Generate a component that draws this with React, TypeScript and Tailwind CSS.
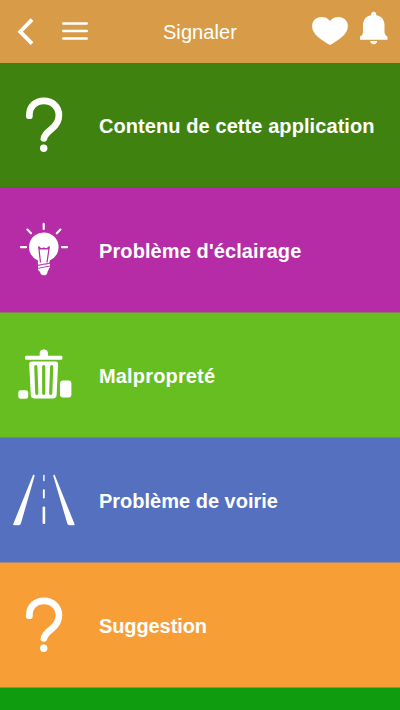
import React from "react";

type Category = {
  label: string;
  color: string;
  tracking: string;
  icon: React.ReactNode;
};

function QuestionIcon() {
  return (
    <svg className="mt-px h-[91px] w-[88px]" viewBox="0 0 88 91" fill="none">
      <path
        d="M29.3 35.4C29.3 26.3 35.5 20.9 43.8 20.9C52.5 20.9 58.9 27 58.9 35.3C58.9 42.3 55.8 45.7 51.4 49.2C46.3 53.3 43.8 55.8 43.8 59.6"
        stroke="white"
        strokeWidth="6.7"
      />
      <path d="M25.95 35V36.2Q26 38.9 28.4 38.9H30.4Q32.7 38.9 32.65 36.2V35Z" fill="white" />
      <path d="M40.5 59H47.1Q46.8 61.8 43.8 61.8Q40.8 61.8 40.5 59Z" fill="white" />
      <circle cx="43.7" cy="68.3" r="3.7" fill="white" />
    </svg>
  );
}

function BulbIcon() {
  return (
    <svg className="mt-px h-[91px] w-[88px]" viewBox="0 0 88 91" fill="none">
      <path
        d="M43.7 18.9V24M27.4 24.6L31 28.3M60.4 24.6L56.8 28.3M21 42.2H26M62 42.2H67"
        stroke="white"
        strokeWidth="2.2"
        strokeLinecap="round"
      />
      <path
        d="M44 27.4A14.7 14.7 0 0 1 49.7 55.6L49.3 58.8L37.9 60.4V55.6A14.7 14.7 0 0 1 44 27.4Z"
        fill="white"
      />
      <path
        d="M40.5 57.5L38.7 41.8L41.1 43.9L43.8 43.2L46.5 43.9L49.3 41.8L47 57.5M39 43.9H49"
        stroke="#b52ca6"
        strokeWidth="1.2"
        strokeLinejoin="round"
      />
      <path d="M38 60.7L50 58.8V62L47.6 66.4Q47.2 70.3 43.8 70.3Q40.6 70.3 40.1 67L38 65Z" fill="white" />
      <path d="M36.7 60.4L50.6 58M37.5 63.4L50.6 60.9" stroke="#b52ca6" strokeWidth="0.9" />
    </svg>
  );
}

function TrashIcon() {
  return (
    <svg className="mt-px h-[91px] w-[88px]" viewBox="0 0 88 91" fill="none">
      <path d="M39.7 26.2V23.5A4.1 4.1 0 0 1 47.9 23.5V26.2Z" fill="white" />
      <rect x="25" y="25.8" width="37.4" height="4" rx="1.4" fill="white" />
      <path
        d="M32.1 31.4H55.2Q58.4 31.4 58.1 34.5L56.6 65.1Q56.4 68.4 53.3 68.4H34Q31 68.4 30.8 65.1L29.2 34.5Q29 31.4 32.1 31.4Z"
        fill="white"
      />
      <path
        d="M35.8 36.5L36.8 63.3M43.7 36.5V63.3M51.7 36.5L50.7 63.3"
        stroke="#66be20"
        strokeWidth="3.2"
        strokeLinecap="round"
      />
      <rect x="18.3" y="60.3" width="9.9" height="8.5" rx="2.4" fill="white" />
      <rect x="60" y="50.5" width="11.4" height="17" rx="3" fill="white" />
    </svg>
  );
}

function RoadIcon() {
  return (
    <svg className="mt-px h-[91px] w-[88px]" viewBox="0 0 88 91" fill="white">
      <path d="M33.1 19.7Q34.9 19.4 34.5 21.2L20.9 68.5Q20.3 70.2 18.9 70.2H14Q12.8 70.2 13.4 68.7Z" />
      <path d="M54.6 19.7Q52.9 19.4 53.4 21.2L67.3 68.5Q67.8 70.2 69.2 70.2H73.8Q75.1 70.2 74.4 68.7Z" />
      <rect x="43.2" y="19.8" width="1.4" height="6.4" rx="0.6" />
      <rect x="42.9" y="34.3" width="1.9" height="9.3" rx="0.8" />
      <rect x="42.6" y="51.4" width="2.6" height="17.7" rx="1.1" />
    </svg>
  );
}

const categories: Category[] = [
  {
    label: "Contenu de cette application",
    color: "border-[#903f7c] bg-[#3f820f]",
    tracking: "tracking-[0.08px]",
    icon: <QuestionIcon />,
  },
  {
    label: "Problème d'éclairage",
    color: "border-[#8c7a60] bg-[#b52ca6]",
    tracking: "tracking-[0.1px]",
    icon: <BulbIcon />,
  },
  {
    label: "Malpropreté",
    color: "border-[#5b9279] bg-[#66be20]",
    tracking: "tracking-[0.16px]",
    icon: <TrashIcon />,
  },
  {
    label: "Problème de voirie",
    color: "border-[#a28a7e] bg-[#5470bf]",
    tracking: "tracking-normal",
    icon: <RoadIcon />,
  },
  {
    label: "Suggestion",
    color: "border-[#849e20] bg-[#f89e37]",
    tracking: "tracking-[-0.1px]",
    icon: <QuestionIcon />,
  },
];

function Header() {
  return (
    <header className="flex h-[63px] shrink-0 items-center bg-[#d89c49] text-white">
      <div className="flex w-[120px] items-center">
        <button aria-label="Retour" className="h-[63px] w-[52px]">
          <svg className="h-[63px] w-[52px]" viewBox="0 0 52 63" fill="none">
            <path d="M32 19.7L20.2 31.7L32 43.7" stroke="white" strokeWidth="3.8" />
          </svg>
        </button>
        <button aria-label="Menu" className="h-[63px] w-[46px]">
          <svg className="h-[63px] w-[46px]" viewBox="0 0 46 63" fill="none">
            <path d="M11.3 23.5H34.7M11.3 31H34.7M11.3 38.5H34.7" stroke="white" strokeWidth="2.6" strokeLinecap="round" />
          </svg>
        </button>
      </div>
      <h1 className="w-[160px] pt-px text-center text-[20px] leading-6 tracking-[0.1px]">Signaler</h1>
      <div className="flex w-[120px] justify-end">
        <button aria-label="Favoris" className="h-[63px] w-[44px]">
          <svg className="h-[63px] w-[44px]" viewBox="306 0 44 63" fill="white">
            <path d="M330 45C323 40.8 312.1 35 312.1 26.2C312.1 20.8 316.2 16.9 321.4 16.9C325.3 16.9 328.4 18.4 330 21.1C331.6 18.4 334.8 16.9 338.6 16.9C343.8 16.9 347.9 20.8 347.9 26.2C347.9 35 337 40.8 330 45Z" />
          </svg>
        </button>
        <button aria-label="Notifications" className="h-[63px] w-[50px]">
          <svg className="h-[63px] w-[50px]" viewBox="350 0 50 63" fill="white">
            <path d="M371.2 15.2V14.2A2.5 2.5 0 0 1 376.2 14.2V15.2C382 16.4 384.5 20.1 384.5 25.5V32C384.5 34.2 385.5 35.4 387.5 36.7V39.7H360V36.7C362 35.4 363 34.2 363 32V25.5C363 20.1 365.5 16.4 371.2 15.2Z" />
            <path d="M370.2 41H377.2C377 43 375.8 44.2 373.7 44.2C371.6 44.2 370.4 43 370.2 41Z" />
          </svg>
        </button>
      </div>
    </header>
  );
}

export default function App() {
  return (
    <div className="flex h-[710px] w-[400px] flex-col overflow-hidden bg-[#0f9d0f] font-['Liberation_Sans',Arial,sans-serif]">
      <Header />
      <main className="flex flex-1 flex-col">
        {categories.map((category) => (
          <button
            key={category.label}
            className={`flex h-[125px] shrink-0 items-center border-b text-left text-white ${category.color}`}
          >
            {category.icon}
            <span
              className={`pt-[2px] pl-[11px] text-[20px] leading-6 font-bold whitespace-nowrap ${category.tracking}`}
            >
              {category.label}
            </span>
          </button>
        ))}
      </main>
    </div>
  );
}
